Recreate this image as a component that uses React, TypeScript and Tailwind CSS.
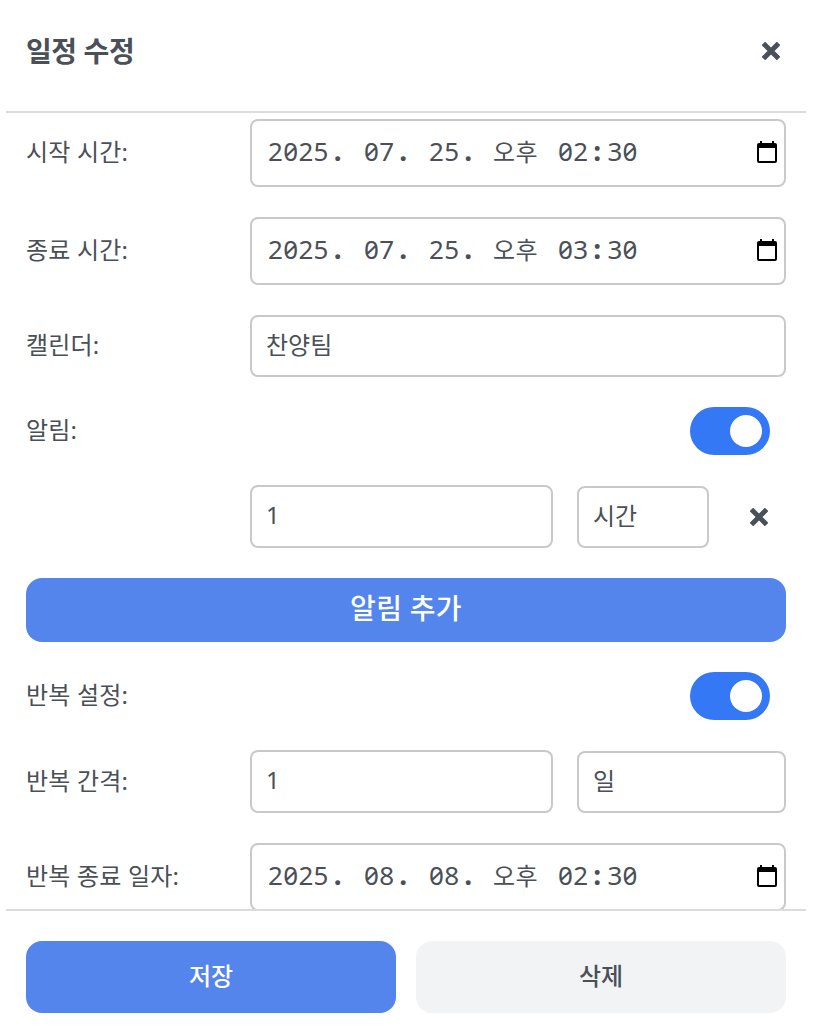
import type { ReactNode } from 'react';

const field = 'box-border flex items-center rounded-[8px] border-2 border-[#c9c9c9] bg-white text-[24px] leading-[36px] text-[#495057]';

function Cross() {
  return (
    <svg width="18" height="18" viewBox="0 0 18 18" aria-hidden="true">
      <path d="M3.2 3.2L14.8 14.8M14.8 3.2L3.2 14.8" stroke="#495057" strokeWidth="5" strokeLinecap="square" />
    </svg>
  );
}

function CalendarIcon() {
  return (
    <svg width="20" height="24" viewBox="0 0 20 24" aria-hidden="true" className="shrink-0">
      <path d="M2 2H3V0H5V2H15V0H17V2H18Q20 2 20 4V20Q20 22 18 22H2Q0 22 0 20V4Q0 2 2 2ZM2 7V20H18V7Z" fill="#000" fillRule="evenodd" />
    </svg>
  );
}

function Row({ label, height, children }: { label: string; height: string; children: ReactNode }) {
  return (
    <div className={`flex shrink-0 items-center ${height}`}>
      <div className="w-[224px] shrink-0 pb-[2px] text-[24px] leading-[36px] tracking-[0.2px]">{label}</div>
      {children}
    </div>
  );
}

function Mark({ children }: { children: string }) {
  return <span className="w-[18px] text-center font-extrabold">{children}</span>;
}

function DateField({ date, time }: { date: string[]; time: string[] }) {
  return (
    <div className={`${field} h-[68px] flex-1 justify-between pl-4 pr-[7px]`}>
      <div className="flex items-baseline pb-[3px] font-['Noto_Sans','Noto_Sans_CJK_KR',sans-serif] text-[26px] tracking-[0.32px] slashed-zero">
        <div className="flex w-[96px]"><span>{date[0]}</span><Mark>.</Mark></div>
        <div className="flex w-[65px]"><span>{date[1]}</span><Mark>.</Mark></div>
        <div className="flex w-[64px]"><span>{date[2]}</span><Mark>.</Mark></div>
        <span className="w-[65px] text-[24px]">오후</span>
        <span>{time[0]}</span><Mark>:</Mark><span className="ml-px">{time[1]}</span>
      </div>
      <CalendarIcon />
    </div>
  );
}

function Toggle() {
  return (
    <div className="mr-4 ml-auto flex h-12 w-20 items-center justify-end rounded-full bg-[#3478f6] p-2">
      <div className="size-8 rounded-full bg-white" />
    </div>
  );
}

export default function App() {
  return (
    <div className="flex h-[1036px] w-[822px] flex-col overflow-hidden bg-white px-[6px] font-['Noto_Sans','Noto_Sans_CJK_KR',sans-serif] text-[#495057]">
      <header className="flex h-[113px] w-[800px] shrink-0 items-start justify-between border-b-2 border-[#dcdcdc] pt-[30px] pr-[26px] pl-5">
        <h1 className="text-[28px] leading-[42px] font-bold tracking-[-0.4px]">일정 수정</h1>
        <button className="mt-[12px]" aria-label="닫기"><Cross /></button>
      </header>
      <main className="flex h-[796px] w-[800px] shrink-0 flex-col gap-[30px] overflow-hidden px-5 pt-[6px]">
        <Row label="시작 시간:" height="h-[68px]"><DateField date={['2025', '07', '25']} time={['02', '30']} /></Row>
        <Row label="종료 시간:" height="h-[68px]"><DateField date={['2025', '07', '25']} time={['03', '30']} /></Row>
        <Row label="캘린더:" height="h-[62px]"><div className={`${field} h-[62px] flex-1 px-[14px] pb-[2px]`}>찬양팀</div></Row>
        <Row label="알림:" height="h-[48px]"><Toggle /></Row>
        <Row label="" height="h-[63px]">
          <div className={`${field} h-[63px] w-[303px] px-[14px] pb-[3px]`}>1</div>
          <div className={`${field} ml-6 h-[62px] w-[132px] px-[14px] pb-[1px]`}>시간</div>
          <button className="ml-[41px]" aria-label="알림 삭제"><Cross /></button>
        </Row>
        <button className="h-[64px] shrink-0 rounded-[16px] bg-[#5385ed] pb-[4px] text-[28px] leading-[42px] font-medium tracking-[0.3px] text-white">알림 추가</button>
        <Row label="반복 설정:" height="h-[48px]"><Toggle /></Row>
        <Row label="반복 간격:" height="h-[63px]">
          <div className={`${field} h-[63px] w-[303px] px-[14px] pb-[3px]`}>1</div>
          <div className={`${field} ml-6 h-[62px] w-[209px] px-[14px] pb-[1px]`}>일</div>
        </Row>
        <Row label="반복 종료 일자:" height="h-[68px]"><DateField date={['2025', '08', '08']} time={['02', '30']} /></Row>
      </main>
      <footer className="flex h-[127px] w-[800px] shrink-0 gap-5 border-t-2 border-[#dcdcdc] px-5 pt-[30px] text-[24px] font-medium">
        <button className="h-[72px] flex-1 rounded-[16px] bg-[#5385ed] pb-[3px] text-white">저장</button>
        <button className="h-[72px] flex-1 rounded-[16px] bg-[#f1f3f5] pb-[3px]">삭제</button>
      </footer>
    </div>
  );
}
